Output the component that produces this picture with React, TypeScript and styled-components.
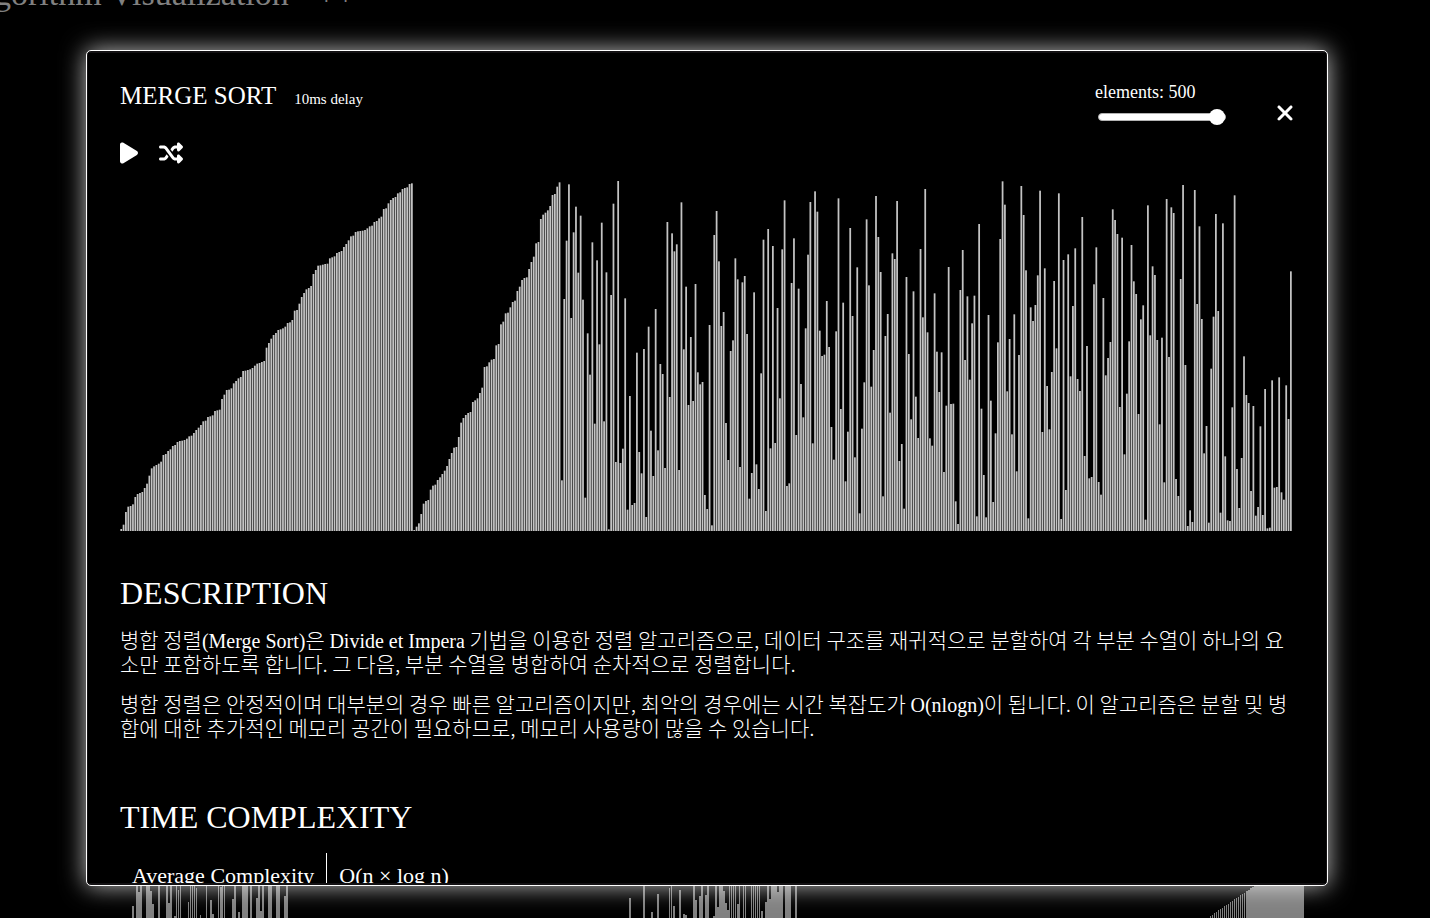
import React, { useState } from 'react';
import styled, { createGlobalStyle } from 'styled-components';
import { FaPlay, FaShuffle, FaXmark } from 'react-icons/fa6';

const GlobalStyle = createGlobalStyle`
  * { box-sizing: border-box; }
  body {
    margin: 0;
    background: #000;
    color: #fff;
    font-family: "Liberation Serif", "Noto Sans CJK KR", serif;
  }
`;

const Page = styled.div`
  height: 100vh;
  overflow: hidden;
  display: flex;
  flex-direction: column;
  justify-content: space-between;
  color: #808080;
`;

const Banner = styled.header`
  display: flex;
  gap: 28px;
  margin: -26px 0 0 -40px;
  font-size: 34px;
  line-height: 40px;
  white-space: nowrap;
`;

const Previews = styled.div`
  display: flex;
  justify-content: space-between;
  align-items: flex-end;
  padding: 0 126px 0 132px;
`;

const PreviewSvg = styled.svg`
  display: block;
  height: 36px;
`;

const Overlay = styled.div`
  position: fixed;
  inset: 0;
  display: flex;
  padding: 50px 102px 32px 86px;
`;

const Modal = styled.section`
  flex: 1;
  min-width: 0;
  display: flex;
  padding: 2px 1px;
  background: #141214;
  border: 1px solid #fff;
  border-radius: 5px;
  box-shadow: 0 0 25px rgba(255, 255, 255, 0.75);
`;

const ModalBody = styled.div`
  flex: 1;
  min-width: 0;
  overflow-y: auto;
  scrollbar-width: none;
  padding: 28px 34px 0 32px;
  background: #000;
`;

const TopBar = styled.header`
  display: flex;
  justify-content: space-between;
  height: 56px;
`;

const TitleGroup = styled.div`
  display: flex;
  align-items: baseline;
  gap: 18px;
`;

const Title = styled.h1`
  margin: 0;
  font-size: 25px;
  line-height: 30px;
  font-weight: 400;
`;

const Delay = styled.span`
  font-size: 15px;
  line-height: 20px;
`;

const Settings = styled.div`
  display: flex;
  align-items: flex-start;
  gap: 50px;
  margin-right: -2px;
`;

const Field = styled.div`
  display: flex;
  flex-direction: column;
  gap: 7px;
  padding-top: 1px;
`;

const FieldLabel = styled.label`
  font-size: 18px;
  line-height: 20px;
`;

const Slider = styled.input`
  appearance: none;
  width: 128px;
  height: 16px;
  margin: 0 0 0 3px;
  background: transparent;

  &::-webkit-slider-runnable-track {
    height: 8px;
    background: #fff;
    border: 1px solid #b2b2b2;
    border-radius: 4px;
  }
  &::-webkit-slider-thumb {
    appearance: none;
    width: 16px;
    height: 16px;
    margin-top: -5px;
    background: #fff;
    border-radius: 50%;
  }
`;

const IconButton = styled.button<{ $width: number }>`
  display: flex;
  padding: 0;
  border: 0;
  background: none;
  color: #fff;
  cursor: pointer;

  svg {
    width: ${(p) => p.$width}px;
    height: 24px;
  }
`;

const CloseButton = styled(IconButton)`
  margin-top: 20px;
`;

const Controls = styled.div`
  display: flex;
  gap: 21px;
  padding-top: 4px;
`;

const Chart = styled.svg`
  display: block;
  width: 100%;
  height: 350px;
  margin: 16px 0 2px;
`;

const Section = styled.section`
  padding-top: 40px;

  & + & {
    padding-top: 42px;
  }
`;

const Heading = styled.h2`
  margin: 0 0 14px;
  font-size: 32px;
  line-height: 40px;
  font-weight: 400;
`;

const Paragraph = styled.p`
  margin: 0 0 16px;
  font-family: "Noto Sans CJK KR", sans-serif;
  font-size: 21px;
  font-weight: 300;
  line-height: 24px;
`;

const Latin = styled.span`
  font-family: "Liberation Serif", serif;
  font-size: 20px;
  line-height: 20px;
`;

const Table = styled.table`
  border-collapse: collapse;
  margin-top: 16px;
  font-size: 22px;
  line-height: 24px;

  th, td {
    padding: 11px 12px;
    font-weight: 400;
    text-align: left;
  }
  th { border-right: 1px solid #fff; }
`;

// Distance of each bar's top from the chart origin, in thirds of a pixel.
const FLOOR = 1083;
const CEILING = 33;
const tops = [
  1077, 1064, 1026, 1010, 1008, 1003, 981, 972, 969, 966, 954, 941, 917, 895, 889, 885, 881, 875, 855, 852,
  843, 838, 828, 825, 816, 813, 812, 810, 806, 799, 797, 789, 780, 773, 765, 754, 752, 741, 739, 736,
  723, 721, 719, 687, 674, 660, 659, 655, 640, 633, 625, 621, 603, 602, 600, 598, 594, 587, 581, 579,
  576, 573, 533, 519, 506, 495, 489, 480, 478, 475, 470, 459, 457, 450, 422, 420, 401, 381, 369, 358,
  354, 348, 312, 300, 287, 286, 284, 282, 281, 265, 262, 259, 249, 246, 243, 231, 222, 211, 199, 197,
  186, 184, 183, 182, 180, 175, 169, 167, 156, 153, 145, 140, 117, 115, 100, 90, 84, 81, 70, 67,
  57, 54, 52, 42, 40,
  1080, 1070, 1060, 1032, 1001, 993, 990, 959, 947, 944, 930, 922, 912, 902, 888, 867, 849, 833, 831, 801,
  758, 744, 735, 729, 726, 696, 691, 685, 669, 653, 591, 589, 577, 569, 567, 526, 522, 463, 455, 430,
  428, 412, 396, 392, 363, 350, 330, 324, 322, 297, 276, 260, 220, 216, 147, 134, 128, 121, 108, 75,
  72, 50, 37,
  931, 387, 212, 43, 444, 187, 110, 308, 137, 389, 983, 490, 614, 217, 761, 271, 523, 158, 754, 307,
  1078, 375, 101, 876, 33, 879, 836, 385, 1019, 678, 1005, 999, 548, 846, 910, 537, 1041, 470, 782, 918,
  417, 841, 582, 612, 894, 156, 681, 190, 244, 223, 900, 97, 538, 350, 705, 501, 693, 342, 607, 643,
  636, 975, 1017, 465, 1066, 195, 123, 274, 468, 426, 759, 870, 543, 511, 265, 328, 891, 337, 318, 492,
  986, 909, 367, 883, 957, 610, 209, 1023, 177, 835, 228, 819, 414, 685, 238, 91, 948, 940, 339, 205,
  795, 356, 642, 742, 475, 254, 96, 820, 64, 125, 482, 558, 554, 393, 531, 771, 869, 484, 85, 717,
  398, 934, 785, 174, 438, 862, 292, 1030, 776, 637, 148, 346, 650, 540, 78, 201, 306, 979, 498, 432,
  728, 250, 267, 93, 873, 822, 1016, 321, 552, 748, 364, 680, 804, 237, 442, 57, 487, 805, 827, 370,
  545, 666, 547, 906, 707, 291, 702, 701, 994, 1062, 360, 240, 570, 379, 629, 460, 377, 1039, 162, 716,
  915, 1042, 435, 692, 996, 790, 517, 207, 34, 104, 664, 507, 793, 433, 904, 555, 48, 135, 301, 1045,
  412, 453, 405, 316, 62, 786, 295, 648, 778, 606, 333, 535, 70, 1047, 270, 960, 253, 619, 408, 235,
  627, 663, 141, 858, 528, 925, 921, 343, 232, 936, 974, 384, 616, 564, 516, 118, 150, 192, 711, 203,
  853, 671, 514, 225, 334, 372, 732, 448, 406, 1049, 106, 496, 289, 315, 510, 763, 503, 937, 87, 561,
  112, 129, 927, 978, 327, 45, 585, 1068, 1021, 1056, 60, 402, 169, 447, 850, 768, 1058, 596, 440, 132,
  423, 1028, 160, 859, 1051, 1053, 712, 76, 897, 1014, 864, 559, 675, 699, 963, 708, 1037, 1011, 769, 1035,
  657, 1075, 1073, 631, 953, 951, 622, 967, 989, 646, 747, 304,
];

function SortChart() {
  const pitch = 1172 / tops.length;
  return (
    <Chart viewBox="0 0 1172 350" preserveAspectRatio="none" role="img" aria-label="Merge sort">
      {tops.map((top, i) => (
        <rect
          key={i}
          x={i * pitch + pitch * 0.15}
          y={(top - CEILING) / 3}
          width={pitch * 0.75}
          height={(FLOOR - top) / 3}
          fill="#c4c4c4"
        />
      ))}
    </Chart>
  );
}

// Preview bars: [column, height, number of columns, thin]
type Bar = [number, number, number?, boolean?];

const quickBars: Bar[] = [
  [0, 12], [2, 36], [3, 26], [4, 36], [7, 36, 2], [9, 27], [10, 14], [13, 36], [17, 36], [18, 15],
  [19, 36], [21, 2], [22, 36, 1, true], [23, 28, 1, true], [24, 36, 1, true], [28, 16, 1, true],
  [29, 36, 1, true], [30, 36, 1, true], [31, 36, 1, true], [32, 30, 1, true], [34, 3, 1, true],
  [37, 36, 1, true], [39, 18], [40, 4], [43, 36, 1, true], [44, 31], [45, 36, 1, true],
  [46, 36, 1, true], [50, 19], [51, 36], [53, 6], [55, 36, 3], [59, 36], [62, 20], [63, 36],
  [64, 7], [65, 36], [68, 36, 2], [72, 36, 2], [76, 22], [77, 36],
];

const heapBars: Bar[] = [
  [0, 20], [7, 36], [11, 6], [14, 24], [20, 30, 1, true], [21, 36, 1, true], [22, 12], [25, 28],
  [27, 4], [28, 3], [32, 36], [33, 18], [35, 22], [36, 36], [38, 23], [39, 36], [42, 2], [43, 36],
  [44, 11], [45, 36, 2], [47, 27], [48, 15], [49, 8], [50, 36, 1, true], [51, 36, 1, true],
  [52, 36, 1, true], [53, 36, 1, true], [54, 14], [55, 36, 1, true], [57, 36, 1, true],
  [58, 36, 1, true], [61, 36, 1, true], [62, 36, 1, true], [63, 36, 1, true], [64, 36, 1, true],
  [65, 36, 1, true], [66, 7], [68, 16], [69, 36], [70, 19], [71, 36, 3], [74, 26], [75, 36, 2],
  [78, 36, 3], [83, 36],
];

const rampBars: Bar[] = Array.from({ length: 47 }, (_, i): Bar => [
  39 + i, Math.min(36, 2 + Math.round(i * 1.38)), 1, i < 18,
]);

function Preview({ bars, columns }: { bars: Bar[]; columns: number }) {
  return (
    <PreviewSvg width={columns * 2} viewBox={`0 0 ${columns * 2} 36`} shapeRendering="crispEdges" aria-hidden>
      {bars.map(([column, height, span = 1, thin = false]) => (
        <rect
          key={column}
          x={column * 2}
          y={36 - height}
          width={thin ? 1 : span * 2}
          height={height}
          fill="#808080"
        />
      ))}
    </PreviewSvg>
  );
}

export default function App() {
  const [count, setCount] = useState(500);

  return (
    <>
      <GlobalStyle />
      <Page>
        <Banner>
          <span>Algorithm Visualization</span>
          <span>++</span>
        </Banner>
        <Previews>
          <Preview bars={quickBars} columns={86} />
          <Preview bars={heapBars} columns={89} />
          <Preview bars={rampBars} columns={86} />
        </Previews>
      </Page>
      <Overlay>
        <Modal role="dialog" aria-labelledby="modal-title">
          <ModalBody>
            <TopBar>
              <TitleGroup>
                <Title id="modal-title">MERGE SORT</Title>
                <Delay>10ms delay</Delay>
              </TitleGroup>
              <Settings>
                <Field>
                  <FieldLabel htmlFor="elements">elements: {count}</FieldLabel>
                  <Slider
                    id="elements"
                    type="range"
                    min={10}
                    max={500}
                    value={count}
                    onChange={(e) => setCount(Number(e.target.value))}
                  />
                </Field>
                <CloseButton $width={18} aria-label="Close"><FaXmark viewBox="0 0 384 512" /></CloseButton>
              </Settings>
            </TopBar>
            <Controls>
              <IconButton $width={18} aria-label="Play"><FaPlay viewBox="0 0 384 512" /></IconButton>
              <IconButton $width={24} aria-label="Shuffle"><FaShuffle /></IconButton>
            </Controls>
            <SortChart />
            <Section>
              <Heading>DESCRIPTION</Heading>
              <Paragraph>
                병합 정렬<Latin>(Merge Sort)</Latin>은 <Latin>Divide et Impera</Latin> 기법을 이용한 정렬 알고리즘으로, 데이터 구조를 재귀적으로 분할하여 각 부분 수열이 하나의 요소만 포함하도록 합니다. 그 다음, 부분 수열을 병합하여 순차적으로 정렬합니다.
              </Paragraph>
              <Paragraph>
                병합 정렬은 안정적이며 대부분의 경우 빠른 알고리즘이지만, 최악의 경우에는 시간 복잡도가 <Latin>O(nlogn)</Latin>이 됩니다. 이 알고리즘은 분할 및 병합에 대한 추가적인 메모리 공간이 필요하므로, 메모리 사용량이 많을 수 있습니다.
              </Paragraph>
            </Section>
            <Section>
              <Heading>TIME COMPLEXITY</Heading>
              <Table>
                <tbody>
                  <tr>
                    <th scope="row">Average Complexity</th>
                    <td>O(n × log n)</td>
                  </tr>
                </tbody>
              </Table>
            </Section>
          </ModalBody>
        </Modal>
      </Overlay>
    </>
  );
}
